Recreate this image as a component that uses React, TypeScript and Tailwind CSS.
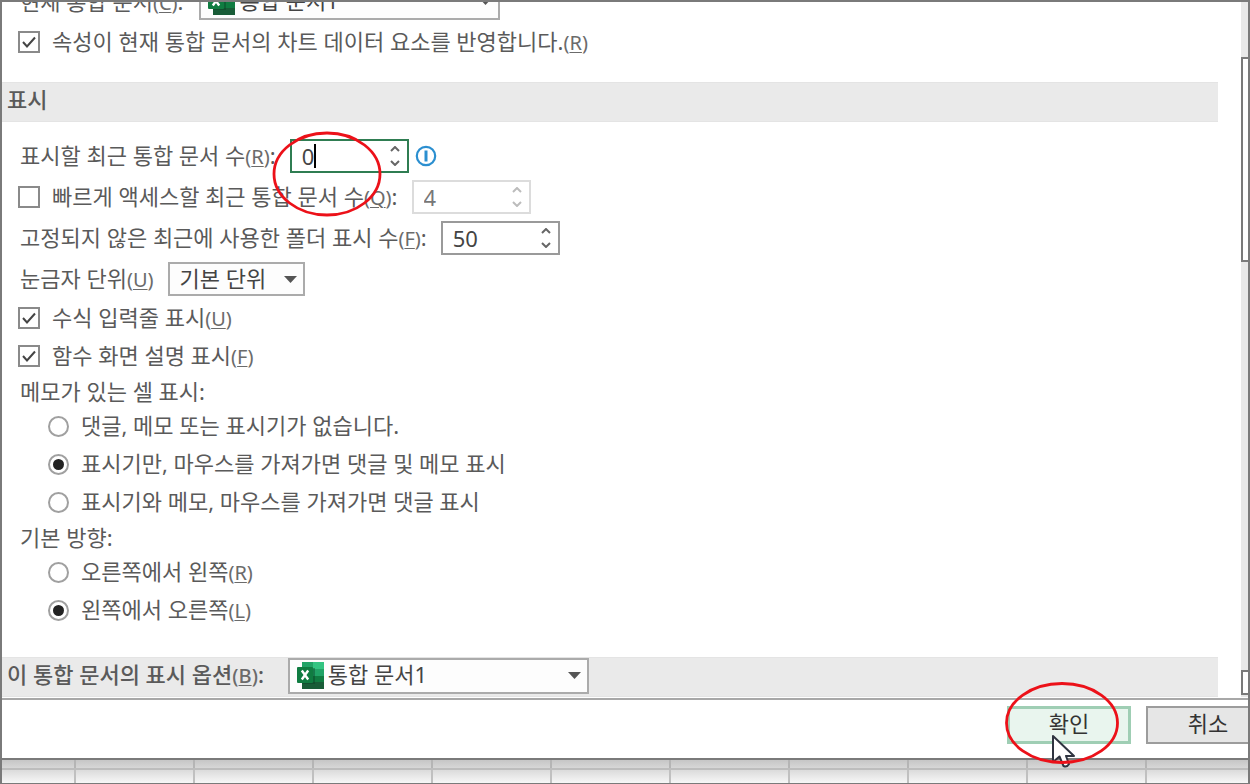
import { useState } from "react";
import type { ReactNode } from "react";

function Key({ k }: { k: string }) {
  return (
    <span className="text-xl text-[#6b6b6b]">
      (<span className="underline decoration-1 underline-offset-2">{k}</span>)
    </span>
  );
}

function ExcelIcon() {
  return (
    <svg viewBox="0 0 27 27" className="h-[27px] w-[27px]" aria-hidden="true">
      <rect x="5" y="0" width="11" height="7" fill="#21a366" />
      <rect x="16" y="0" width="11" height="7" fill="#33c481" />
      <rect x="5" y="7" width="11" height="7" fill="#107c41" />
      <rect x="16" y="7" width="11" height="7" fill="#21a366" />
      <rect x="5" y="14" width="22" height="13" fill="#185c37" />
      <rect x="16" y="14" width="11" height="6" fill="#107c41" />
      <rect x="5" y="6" width="13" height="16" fill="#0b3d22" opacity="0.4" />
      <rect x="0" y="5" width="16" height="16" rx="1" fill="#107c41" />
      <path d="M4.8 8.5 L11.2 17.5 M11.2 8.5 L4.8 17.5" stroke="#fff" strokeWidth="2.4" />
    </svg>
  );
}

function Triangle() {
  return (
    <svg viewBox="0 0 13 7" className="pointer-events-none absolute top-[14px] right-2 h-[7px] w-[13px]" aria-hidden="true">
      <path d="M0 0H13L6.5 7Z" fill="#555" />
    </svg>
  );
}

function WorkbookSelect({ id, label }: { id: string; label: string }) {
  return (
    <div className="relative w-[301px] shrink-0">
      <span className="pointer-events-none absolute top-1 left-[9px]">
        <ExcelIcon />
      </span>
      <select
        id={id}
        aria-label={label}
        className="block h-9 w-full appearance-none border-2 border-[#ababab] bg-[#fdfdfd] pb-1 pl-[38px] leading-7 text-[#444]"
      >
        <option>통합 문서1</option>
      </select>
      <Triangle />
    </div>
  );
}

type SpinProps = {
  id: string;
  initial: number;
  tone: "active" | "normal" | "disabled";
  children?: ReactNode;
};

function Spin({ id, initial, tone, children }: SpinProps) {
  const [value, setValue] = useState(initial);
  const border = {
    active: "border-[#2f7d52] text-[#444]",
    normal: "border-[#9a9a9a] text-[#444]",
    disabled: "border-[#dcdcdc] text-[#777]",
  }[tone];
  const arrow = tone === "disabled" ? "text-[#bcbcbc]" : "text-[#666]";
  const off = tone === "disabled";
  return (
    <div className={`relative flex h-[34px] w-[119px] shrink-0 border-2 bg-white ${border}`}>
      <input
        id={id}
        inputMode="numeric"
        disabled={off}
        value={value}
        onChange={(e) => setValue(Number(e.target.value) || 0)}
        className="h-full w-full min-w-0 bg-transparent pl-[10px] outline-none"
      />
      <div className={`flex w-6 shrink-0 flex-col items-center justify-center gap-2 ${arrow}`}>
        <button type="button" disabled={off} aria-label="증가" onClick={() => setValue(value + 1)}>
          <svg viewBox="0 0 10 6" className="block h-[6px] w-[10px]">
            <path d="M1 5L5 1L9 5" fill="none" stroke="currentColor" strokeWidth="2" />
          </svg>
        </button>
        <button type="button" disabled={off} aria-label="감소" onClick={() => setValue(Math.max(0, value - 1))}>
          <svg viewBox="0 0 10 6" className="block h-[6px] w-[10px]">
            <path d="M1 1L5 5L9 1" fill="none" stroke="currentColor" strokeWidth="2" />
          </svg>
        </button>
      </div>
      {children}
    </div>
  );
}

function Check({ id, on = false }: { id: string; on?: boolean }) {
  return (
    <span className="relative mr-3 block h-[22px] w-[22px] shrink-0">
      <input
        id={id}
        type="checkbox"
        defaultChecked={on}
        className="peer block h-[22px] w-[22px] appearance-none border-2 border-[#8a8a8a] bg-white"
      />
      <svg
        viewBox="0 0 22 22"
        className="pointer-events-none absolute inset-0 hidden h-[22px] w-[22px] peer-checked:block"
        aria-hidden="true"
      >
        <path d="M5 11L9 15.5L17 6.5" fill="none" stroke="#444" strokeWidth="2" />
      </svg>
    </span>
  );
}

function CheckRow({ id, on, children }: { id: string; on?: boolean; children: ReactNode }) {
  return (
    <div className="flex h-[38px] items-center pl-4">
      <Check id={id} on={on} />
      <label htmlFor={id}>{children}</label>
    </div>
  );
}

function RadioRow({ id, name, on = false, children }: { id: string; name: string; on?: boolean; children: ReactNode }) {
  return (
    <div className="flex h-[38px] items-center pl-[46px]">
      <span className="relative mr-3 block h-[21px] w-[21px] shrink-0">
        <input
          id={id}
          type="radio"
          name={name}
          defaultChecked={on}
          className="peer block h-[21px] w-[21px] appearance-none rounded-full border-2 border-[#a0a0a0] bg-white"
        />
        <span className="pointer-events-none absolute inset-[5px] hidden rounded-full bg-[#222] peer-checked:block" />
      </span>
      <label htmlFor={id}>{children}</label>
    </div>
  );
}

function Section({ children }: { children: ReactNode }) {
  return (
    <div className="mr-[23px] flex h-10 items-start gap-6 border-y border-[#e4e4e4] bg-[#eaeaea] pl-[5px] font-medium text-[#5a5a5a]">
      {children}
    </div>
  );
}

export default function App() {
  return (
    <div
      lang="ko"
      className="flex min-h-screen w-full flex-col overflow-hidden border-2 border-[#7a7a7a] bg-white font-['Noto_Sans','Noto_Sans_CJK_KR',sans-serif] text-[22px] leading-8 whitespace-nowrap text-[#5a5a5a] [&_label]:pb-[2px]"
    >
      <div className="flex">
        <main className="min-w-0 flex-1">
          <div className="-mt-[18px] flex h-9 items-center gap-4 pl-[18px]">
            <label htmlFor="chart-book">
              현재 통합 문서
              <Key k="C" />:
            </label>
            <WorkbookSelect id="chart-book" label="현재 통합 문서" />
          </div>
          <div className="mt-[3px] mb-[21px]">
            <CheckRow id="follow" on>
              속성이 현재 통합 문서의 차트 데이터 요소를 반영합니다.
              <Key k="R" />
            </CheckRow>
          </div>

          <Section>
            <h2>표시</h2>
          </Section>

          <div className="mt-[17px] flex flex-col gap-[7px]">
            <div className="flex h-[34px] items-center pl-[18px]">
              <label htmlFor="recent" className="mr-[14px]">
                표시할 최근 통합 문서 수<Key k="R" />:
              </label>
              <Spin id="recent" initial={0} tone="active">
                <span className="absolute top-[3px] left-[22px] h-6 w-[2px] bg-black" />
                <svg
                  viewBox="0 0 110 86"
                  className="pointer-events-none absolute -top-[10px] -left-[20px] z-10 h-[86px] w-[110px]"
                  aria-hidden="true"
                >
                  <ellipse cx="55" cy="43" rx="53" ry="41" fill="none" stroke="#ec1119" strokeWidth="2.8" />
                </svg>
              </Spin>
              <svg viewBox="0 0 22 22" className="ml-[6px] h-[22px] w-[22px]" aria-hidden="true">
                <circle cx="11" cy="11" r="9.2" fill="none" stroke="#2b8fd0" strokeWidth="2.2" />
                <path d="M11 5.5V16.5" stroke="#2b8fd0" strokeWidth="3" />
              </svg>
            </div>
            <div className="flex h-[34px] items-center pl-4">
              <Check id="quick-on" />
              <label htmlFor="quick-on" className="mr-[14px]">
                빠르게 액세스할 최근 통합 문서 수<Key k="Q" />:
              </label>
              <Spin id="quick" initial={4} tone="disabled" />
            </div>
            <div className="flex h-[34px] items-center pl-[18px]">
              <label htmlFor="folders" className="mr-[14px]">
                고정되지 않은 최근에 사용한 폴더 표시 수<Key k="F" />:
              </label>
              <Spin id="folders" initial={50} tone="normal" />
            </div>
            <div className="flex h-[34px] items-center pl-[18px]">
              <label htmlFor="unit" className="mr-[14px]">
                눈금자 단위
                <Key k="U" />
              </label>
              <div className="relative w-[137px]">
                <select
                  id="unit"
                  className="block h-[34px] w-full appearance-none border-2 border-[#ababab] bg-[#fdfdfd] pb-[2px] pl-[10px] leading-7 text-[#444]"
                >
                  <option>기본 단위</option>
                </select>
                <Triangle />
              </div>
            </div>
          </div>

          <div className="mt-[3px] mb-7">
            <CheckRow id="formula" on>
              수식 입력줄 표시
              <Key k="U" />
            </CheckRow>
            <CheckRow id="tips" on>
              함수 화면 설명 표시
              <Key k="F" />
            </CheckRow>
            <fieldset>
              <legend className="pl-[18px]">메모가 있는 셀 표시:</legend>
              <RadioRow id="memo-none" name="memo">
                댓글, 메모 또는 표시기가 없습니다.
              </RadioRow>
              <RadioRow id="memo-hover" name="memo" on>
                표시기만, 마우스를 가져가면 댓글 및 메모 표시
              </RadioRow>
              <RadioRow id="memo-all" name="memo">
                표시기와 메모, 마우스를 가져가면 댓글 표시
              </RadioRow>
            </fieldset>
            <fieldset>
              <legend className="pl-[18px]">기본 방향:</legend>
              <RadioRow id="rtl" name="direction">
                오른쪽에서 왼쪽
                <Key k="R" />
              </RadioRow>
              <RadioRow id="ltr" name="direction" on>
                왼쪽에서 오른쪽
                <Key k="L" />
              </RadioRow>
            </fieldset>
          </div>

          <Section>
            <h2>
              이 통합 문서의 표시 옵션
              <Key k="B" />:
            </h2>
            <div className="font-normal">
              <WorkbookSelect id="book" label="이 통합 문서의 표시 옵션" />
            </div>
          </Section>
        </main>

        <div className="flex w-[7px] shrink-0 flex-col bg-[#e8e8e8]" aria-hidden="true">
          <div className="mt-[55px] h-[205px] border-2 border-r-0 border-[#7a7a7a] bg-white" />
          <div className="mt-auto mb-[2px] h-[25px] border-2 border-r-0 border-[#7a7a7a] bg-white" />
        </div>
      </div>

      <footer className="mt-px flex h-[60px] items-start justify-end gap-[15px] border-t-2 border-[#a8a8a8] bg-white pt-[6px] text-[#333]">
        <div className="relative">
          <button type="button" className="block h-[38px] w-[124px] border-[3px] border-[#9fceb4] bg-[#e9f5ee] pb-1 leading-7">
            확인
          </button>
          <svg
            viewBox="0 0 114 82"
            className="pointer-events-none absolute -top-[24px] -left-[2px] z-10 h-[82px] w-[114px] overflow-visible"
            aria-hidden="true"
          >
            <path
              d="M48 54V80L54.5 74.5L58.5 84Q62 85.5 64 82L61 74H69Z"
              fill="#fff"
              stroke="#2f3440"
              strokeWidth="2"
              strokeLinejoin="round"
            />
            <ellipse cx="57" cy="41" rx="55.5" ry="39.5" fill="none" stroke="#ec1119" strokeWidth="2.8" />
          </svg>
        </div>
        <button type="button" className="-mr-[22px] block h-[38px] w-[124px] border-2 border-[#9c9c9c] bg-[#e6e6e6] pb-1 leading-7">
          취소
        </button>
      </footer>

      <div
        className="flex min-h-[25px] flex-1 flex-col border-t-2 border-[#7a7a7a] bg-linear-to-b from-[#c6c6c6] to-[#f7f7f7]"
        aria-hidden="true"
      >
        <div className="h-[10px] shrink-0 border-b-2 border-[#bdbdbd] bg-[repeating-linear-gradient(90deg,transparent_0_117px,#b5b5b5_117px_119px)] bg-position-[-45px_0]" />
        <div className="flex-1 bg-[repeating-linear-gradient(90deg,transparent_0_117px,#c0c0c0_117px_119px)] bg-position-[-45px_0]" />
      </div>
    </div>
  );
}
